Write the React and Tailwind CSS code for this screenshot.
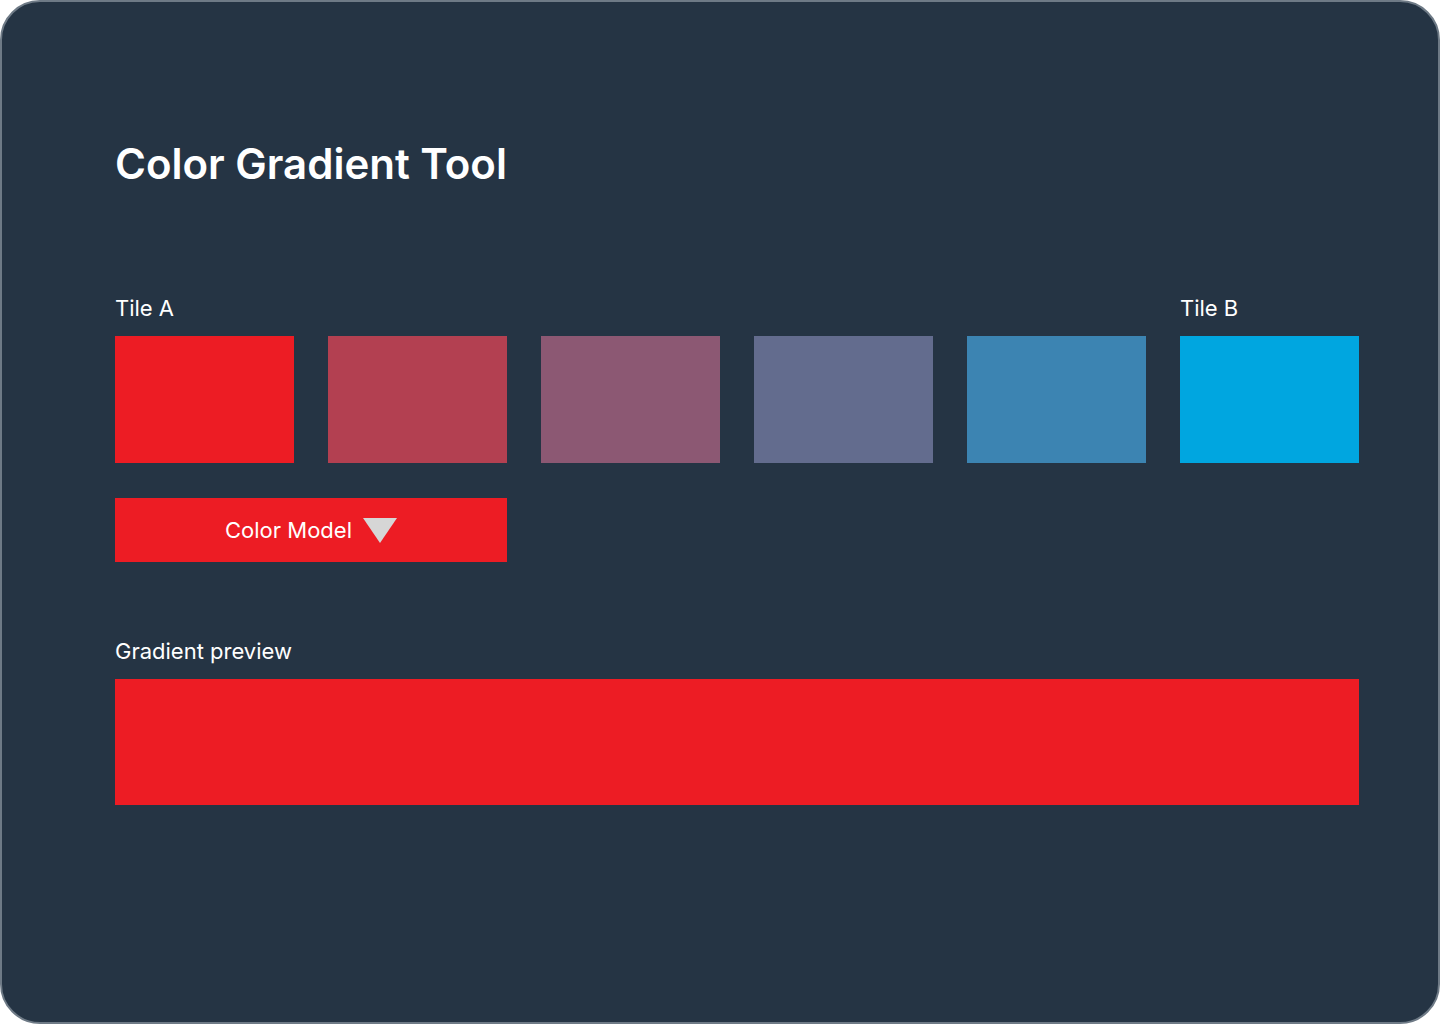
import React from "react";

const tiles = ["#ED1C24", "#B34051", "#8C5873", "#636C8E", "#3C84B2", "#00A6E0"];

const App = () => {
    return (
        <div className="w-[1440px] h-[1024px] bg-white [font-optical-sizing:none]" style={{ fontFamily: "Inter, 'Noto Sans', sans-serif" }}>
            <div className="w-full h-full rounded-[40px] border-2 border-[#6e7a86] bg-[#253444] pl-[113px] pr-[79px] pt-[134px] text-white">
                <h1 className="text-[42px] leading-[56px] font-semibold">Color Gradient Tool</h1>

                {/* Tiles */}
                <div className="mt-[102px] flex justify-between text-[22px] leading-[28px]">
                    <span>Tile A</span>
                    <span className="w-[179px]">Tile B</span>
                </div>
                <div className="mt-[14px] flex gap-[34px]">
                    {tiles.map((c) => (
                        <div key={c} className="w-[179px] h-[127px]" style={{ backgroundColor: c }} />
                    ))}
                </div>

                {/* Color model select */}
                <button className="mt-[35px] w-[392px] h-[64px] bg-[#ED1C24] flex items-center justify-center gap-[11px] text-[22px]">
                    <span>Color Model</span>
                    <svg width="34" height="25" viewBox="0 0 34 25">
                        <polygon points="0,0 34,0 17,25" fill="#d6d6d6" />
                    </svg>
                </button>

                {/* Preview */}
                <div className="mt-[75px] text-[22px] leading-[28px]">Gradient preview</div>
                <div className="mt-[14px] h-[126px] bg-[#ED1C24]" />
            </div>
        </div>
    );
};

export default App;
